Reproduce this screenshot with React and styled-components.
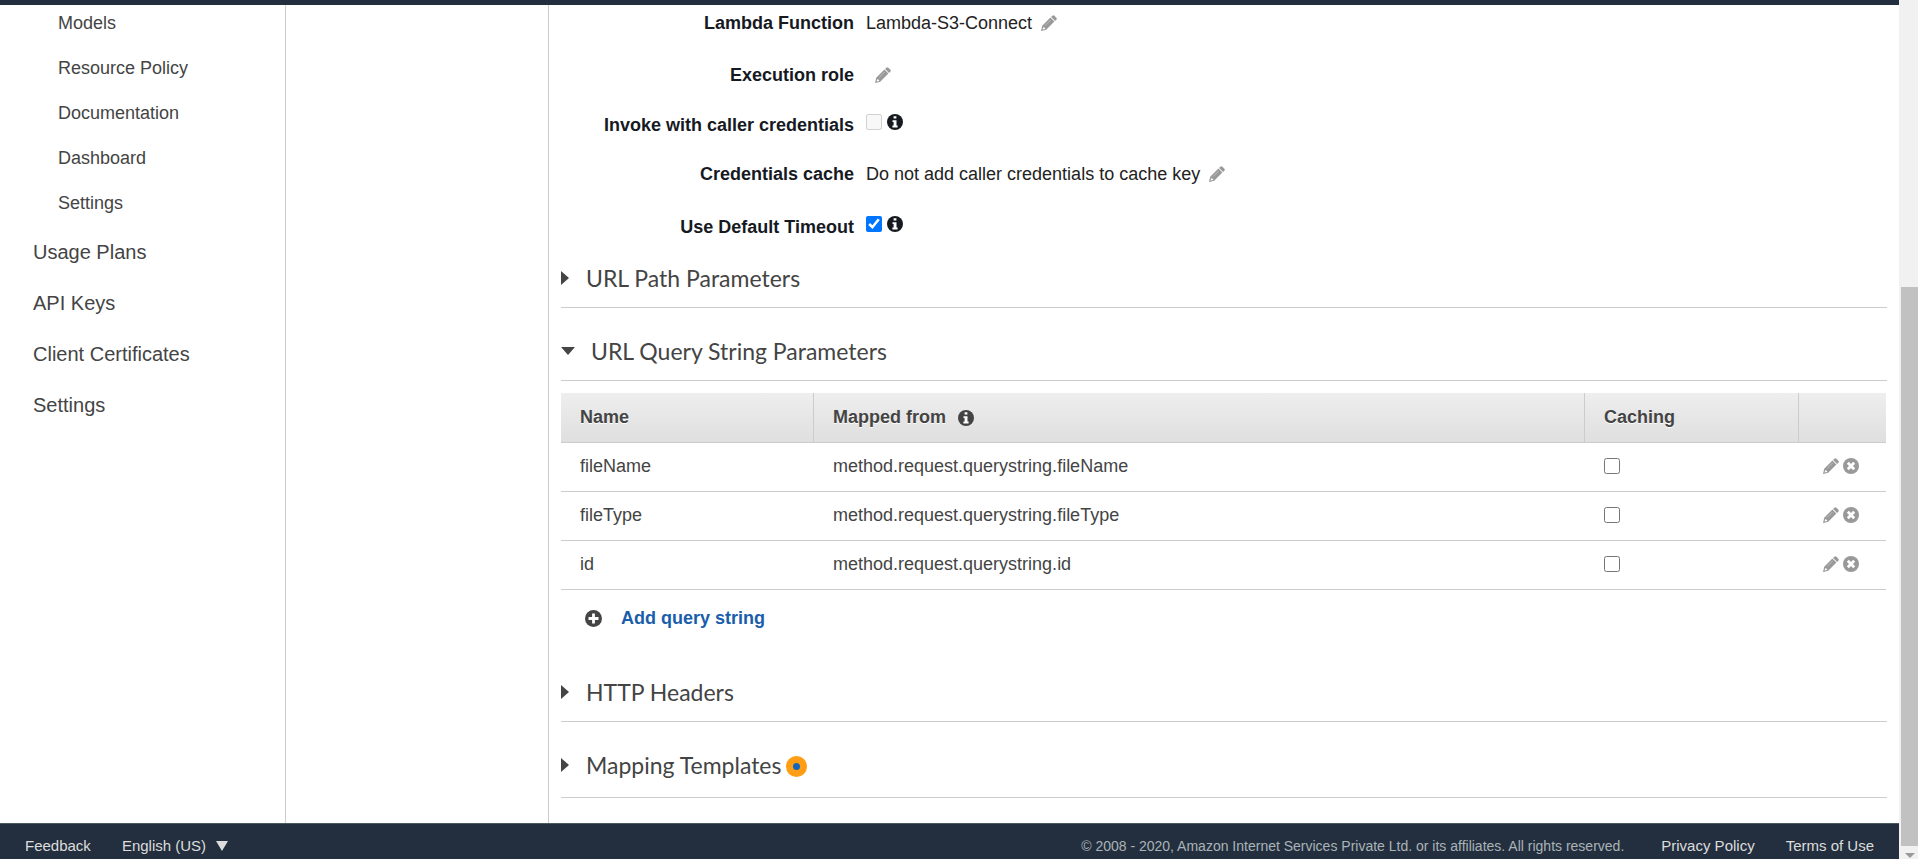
import React from "react";
import styled, { createGlobalStyle } from "styled-components";

const Global = createGlobalStyle`
  * { box-sizing: border-box; }
  html, body { margin: 0; padding: 0; }
  body {
    background: #fff;
    color: #444;
    font-family: "Liberation Sans", Arial, sans-serif;
    font-size: 18px;
    overflow: hidden;
  }
`;

const Shell = styled.div`
  display: flex;
  height: 100vh;
`;

const Page = styled.div`
  flex: 1;
  min-width: 0;
  display: flex;
  flex-direction: column;
`;

const TopBar = styled.header`
  flex: none;
  height: 5px;
  background: #232f3e;
`;

const Columns = styled.div`
  flex: 1;
  min-height: 0;
  display: flex;
`;

const Sidebar = styled.nav`
  flex: none;
  width: 286px;
  border-right: 1px solid #ccc;
`;

const SubList = styled.ul`
  list-style: none;
  margin: 0;
  padding: 0 0 0 58px;
`;

const MainList = styled(SubList)`
  padding: 0 0 0 33px;
`;

const SubItem = styled.li`
  height: 45px;
  line-height: 36px;
`;

const MainItem = styled.li`
  height: 51px;
  line-height: 36px;
  padding-top: 4px;
  font-size: 20px;
`;

const NavLink = styled.a`
  color: #444;
  text-decoration: none;
`;

const ResourcePane = styled.div`
  flex: none;
  width: 263px;
  border-right: 1px solid #ccc;
`;

const Content = styled.main`
  flex: 1;
  min-width: 0;
  padding: 0 12px;
`;

const Field = styled.div`
  display: flex;
  align-items: ${(p) => p.$align || "center"};
  height: ${(p) => p.$height}px;
  padding-top: ${(p) => p.$top || 0}px;
  gap: 12px;
  color: #222;
  line-height: 24px;
`;

const FieldLabel = styled.label`
  flex: none;
  width: 293px;
  text-align: right;
  font-weight: bold;
  color: #16191f;
`;

const FieldValue = styled.div`
  display: flex;
  align-items: center;
  height: 24px;
  gap: 9px;
`;

const CheckValue = styled(FieldValue)`
  gap: 5px;
  padding-bottom: 6px;
`;

const IconButton = styled.button`
  display: flex;
  border: 0;
  padding: 0;
  background: none;
  color: ${(p) => p.$color || "#999"};
`;

const Checkbox = styled.input`
  flex: none;
  display: block;
  width: 16px;
  height: 16px;
  margin: 0;
`;

const SectionHead = styled.h2`
  display: flex;
  align-items: center;
  height: ${(p) => p.$height}px;
  margin: 0;
  padding-bottom: ${(p) => (p.$badge ? 16 : 13)}px;
  border-bottom: 1px solid #ccc;
  font: 400 23px/32px Lato, sans-serif;
  color: #444;
`;

const Toggle = styled.button`
  display: flex;
  align-items: center;
  gap: ${(p) => (p.$open ? 16 : 17)}px;
  border: 0;
  padding: 0;
  background: none;
  font: inherit;
  color: inherit;
`;

const HeadGroup = styled.div`
  display: flex;
  align-items: center;
  align-self: flex-end;
  gap: 5px;
`;

const Caret = styled.span`
  width: 0;
  height: 0;
  border: solid transparent;
  ${(p) =>
    p.$open
      ? "border-width: 8px 7px 0; border-top-color: #444;"
      : "border-width: 7px 0 7px 8px; border-left-color: #444;"}
`;

const Table = styled.table`
  width: calc(100% - 1px);
  margin-top: 12px;
  border-collapse: separate;
  border-spacing: 0;
  table-layout: fixed;
`;

const Th = styled.th`
  height: 50px;
  padding: 0 19px;
  text-align: left;
  background: linear-gradient(#eee, #dfdfdf);
  border-bottom: 1px solid #ccc;
  text-shadow: 0 1px 0 #fff;
  & + & { border-left: 1px solid #ccc; }
`;

const Td = styled.td`
  height: 49px;
  padding: 0 19px 2px ${(p) => p.$left || 19}px;
  border-bottom: 1px solid #ccc;
`;

const Inline = styled.div`
  display: flex;
  align-items: center;
  gap: ${(p) => p.$gap}px;
`;

const AddRow = styled.button`
  display: flex;
  align-items: center;
  gap: 19px;
  height: 56px;
  margin: 0 0 26px;
  padding: 0 24px;
  border: 0;
  background: none;
  color: #444;
  font: bold 18px/24px "Liberation Sans", Arial, sans-serif;
`;

const AddText = styled.span`
  color: #1a5eab;
`;

const Badge = styled.span`
  width: 21px;
  height: 21px;
  margin-top: 3px;
  border-radius: 50%;
  border: 7px solid #ff9e15;
  background: #1166bb;
`;

const Footer = styled.footer`
  flex: none;
  display: flex;
  align-items: center;
  justify-content: space-between;
  height: 36px;
  padding: 8px 25px 0;
  border-top: 1px solid #4a5a60;
  background: #232f3e;
  font-size: 15px;
`;

const FooterGroup = styled.div`
  display: flex;
  align-items: center;
  gap: 31px;
`;

const FooterLink = styled.a`
  color: #ddd;
  text-decoration: none;
`;

const FooterButton = styled.button`
  display: flex;
  align-items: center;
  gap: 10px;
  border: 0;
  padding: 0;
  background: none;
  color: #ddd;
  font: inherit;
`;

const DownMark = styled.span`
  border: solid transparent;
  border-width: 10px 6px 0;
  border-top-color: #ddd;
`;

const Copyright = styled.span`
  font-size: 14px;
  color: #aab3b8;
  margin-right: 6px;
`;

const ScrollTrack = styled.div`
  flex: none;
  display: flex;
  flex-direction: column;
  align-items: center;
  width: 19px;
  padding: 287px 0 1px 2px;
  background: #f1f1f1;
`;

const ScrollThumb = styled.div`
  flex: 1;
  width: 100%;
  background: #c1c1c1;
`;

const ScrollArrow = styled.span`
  margin-top: 7px;
  border: solid transparent;
  border-width: 5px 5px 0;
  border-top-color: #999;
`;

const Pencil = () => (
  <svg width="16" height="16" viewBox="0 0 16 16" fill="currentColor" aria-hidden="true">
    <path d="M11.4.7Q12.4-.2 13.4.7L15.4 2.7Q16.3 3.7 15.3 4.7L14.1 5.9 10.1 1.9z" />
    <path fillRule="evenodd" d="M9.4 2.6 13.4 6.6 5.2 14.8 .3 15.9Q0 16 .1 15.7L1.2 10.8zM2.1 11.9 1.6 14.4 4.1 13.9 4.1 12.7 3.1 12.7z" />
    <path d="M9.7 4.9 4.1 10.5" stroke="#fff" strokeWidth=".6" opacity=".6" />
  </svg>
);

const Info = () => (
  <svg width="16" height="16" viewBox="0 0 16 16" aria-hidden="true">
    <circle cx="8" cy="8" r="8" fill="currentColor" />
    <path fill="#fff" d="M6.6 2.2h2.8v2.4H6.6zM5.5 6.2h4v5.4h1.1v1.8H5.4v-1.8h1.2V8H5.5z" />
  </svg>
);

const Remove = () => (
  <svg width="16" height="16" viewBox="0 0 16 16" aria-hidden="true">
    <circle cx="8" cy="8" r="8" fill="currentColor" />
    <path d="M4.8 4.8 11.2 11.2M11.2 4.8 4.8 11.2" stroke="#fff" strokeWidth="2.8" />
  </svg>
);

const Plus = () => (
  <svg width="17" height="17" viewBox="0 0 17 17" aria-hidden="true">
    <circle cx="8.5" cy="8.5" r="8.5" fill="currentColor" />
    <path d="M8.5 3.5v10M3.5 8.5h10" stroke="#fff" strokeWidth="2.8" />
  </svg>
);

const EditButton = ({ label }) => (
  <IconButton type="button" aria-label={label}><Pencil /></IconButton>
);

const InfoButton = ({ label, color }) => (
  <IconButton type="button" $color={color} aria-label={label}><Info /></IconButton>
);

function Section({ title, open, height, badge }) {
  return (
    <SectionHead $height={height} $badge={badge}>
      <HeadGroup>
        <Toggle type="button" aria-expanded={!!open} $open={open}>
          <Caret $open={open} />
          {title}
        </Toggle>
        {badge && <Badge />}
      </HeadGroup>
    </SectionHead>
  );
}

const subLinks = ["Models", "Resource Policy", "Documentation", "Dashboard", "Settings"];
const mainLinks = ["Usage Plans", "API Keys", "Client Certificates", "Settings"];
const params = ["fileName", "fileType", "id"];

export default function App() {
  return (
    <Shell>
      <Global />
      <Page>
        <TopBar />
        <Columns>
          <Sidebar>
            <SubList>
              {subLinks.map((t) => (
                <SubItem key={t}><NavLink href="#">{t}</NavLink></SubItem>
              ))}
            </SubList>
            <MainList>
              {mainLinks.map((t) => (
                <MainItem key={t}><NavLink href="#">{t}</NavLink></MainItem>
              ))}
            </MainList>
          </Sidebar>
          <ResourcePane />
          <Content>
            <Field $height={44} $align="flex-start" $top={6}>
              <FieldLabel as="span">Lambda Function</FieldLabel>
              <FieldValue>Lambda-S3-Connect <EditButton label="Edit Lambda function" /></FieldValue>
            </Field>
            <Field $height={52}>
              <FieldLabel as="span">Execution role</FieldLabel>
              <FieldValue><span /><EditButton label="Edit execution role" /></FieldValue>
            </Field>
            <Field $height={48}>
              <FieldLabel htmlFor="caller">Invoke with caller credentials</FieldLabel>
              <CheckValue>
                <Checkbox id="caller" type="checkbox" disabled />
                <InfoButton color="#16191f" label="About caller credentials" />
              </CheckValue>
            </Field>
            <Field $height={50}>
              <FieldLabel as="span">Credentials cache</FieldLabel>
              <FieldValue>Do not add caller credentials to cache key <EditButton label="Edit credentials cache" /></FieldValue>
            </Field>
            <Field $height={56}>
              <FieldLabel htmlFor="timeout">Use Default Timeout</FieldLabel>
              <CheckValue>
                <Checkbox id="timeout" type="checkbox" defaultChecked />
                <InfoButton color="#16191f" label="About default timeout" />
              </CheckValue>
            </Field>
            <Section title="URL Path Parameters" height={53} />
            <Section title="URL Query String Parameters" height={73} open />
            <Table>
              <colgroup>
                <col style={{ width: "19.02%" }} />
                <col />
                <col style={{ width: "16.15%" }} />
                <col style={{ width: "6.64%" }} />
              </colgroup>
              <thead>
                <tr>
                  <Th>Name</Th>
                  <Th><Inline $gap={12}>Mapped from <InfoButton color="#444" label="About mapped from" /></Inline></Th>
                  <Th>Caching</Th>
                  <Th aria-label="Actions" />
                </tr>
              </thead>
              <tbody>
                {params.map((p) => (
                  <tr key={p}>
                    <Td>{p}</Td>
                    <Td $left={20}>method.request.querystring.{p}</Td>
                    <Td $left={20}><Checkbox type="checkbox" aria-label={`Cache ${p}`} /></Td>
                    <Td $left={25}>
                      <Inline $gap={4}>
                        <EditButton label={`Edit ${p}`} />
                        <IconButton type="button" aria-label={`Remove ${p}`}><Remove /></IconButton>
                      </Inline>
                    </Td>
                  </tr>
                ))}
              </tbody>
            </Table>
            <AddRow type="button"><Plus /><AddText>Add query string</AddText></AddRow>
            <Section title="HTTP Headers" height={50} />
            <Section title="Mapping Templates" height={76} badge />
          </Content>
        </Columns>
        <Footer>
          <FooterGroup>
            <FooterLink href="#">Feedback</FooterLink>
            <FooterButton type="button">English (US) <DownMark /></FooterButton>
          </FooterGroup>
          <FooterGroup>
            <Copyright>© 2008 - 2020, Amazon Internet Services Private Ltd. or its affiliates. All rights reserved.</Copyright>
            <FooterLink href="#">Privacy Policy</FooterLink>
            <FooterLink href="#">Terms of Use</FooterLink>
          </FooterGroup>
        </Footer>
      </Page>
      <ScrollTrack>
        <ScrollThumb />
        <ScrollArrow />
      </ScrollTrack>
    </Shell>
  );
}
